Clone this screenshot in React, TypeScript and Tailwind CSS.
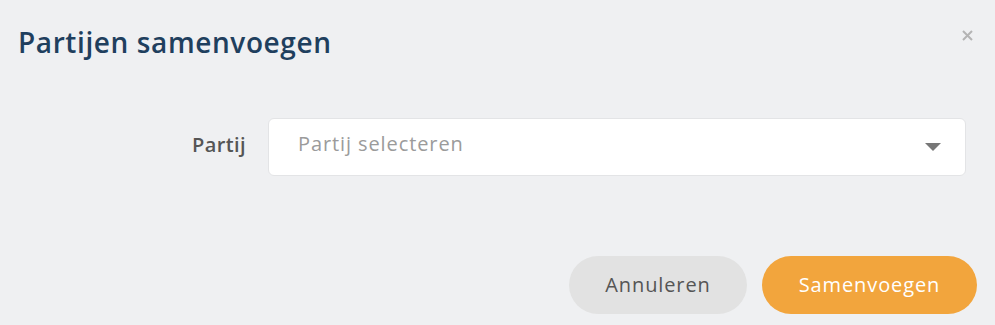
const App = () => {
  return (
    <div
      className="w-[995px] h-[325px] bg-[#eff0f2] relative"
      style={{ fontFamily: "'Open Sans', sans-serif" }}
    >
      <div className="flex items-start justify-between pl-[18px] pr-[22px] pt-[22px]">
        <h1 className="text-[28px] leading-[40px] tracking-[0.6px] text-[#1f3f5e] font-semibold">Partijen samenvoegen</h1>
        <svg className="mt-[8px]" width="11" height="11" viewBox="0 0 11 11">
          <path d="M1 1 L10 10 M10 1 L1 10" stroke="#b4b4b4" strokeWidth="2" />
        </svg>
      </div>
      <div className="flex items-center pt-[56px]">
        <label className="w-[268px] pr-[22px] mb-[4px] text-right text-[20px] tracking-[0.4px] font-semibold text-[#555]">Partij</label>
        <div className="w-[698px] h-[58px] bg-white border border-[#e3e4e6] rounded-[6px] flex items-center justify-between pl-[29px] pr-[24px]">
          <span className="mb-[6px] text-[20px] tracking-[0.9px] text-[#9b9b9b]">Partij selecteren</span>
          <svg width="16" height="8" viewBox="0 0 16 8">
            <path d="M0 0 H16 L8 8 Z" fill="#777" />
          </svg>
        </div>
      </div>
      <div className="flex justify-end gap-[15px] pr-[18px] pt-[80px]">
        <button className="w-[178px] h-[58px] rounded-full bg-[#e2e2e2] text-[20px] tracking-[0.9px] text-[#555]">Annuleren</button>
        <button className="w-[215px] h-[58px] rounded-full bg-[#f2a53d] text-[20px] tracking-[0.9px] text-white font-medium">Samenvoegen</button>
      </div>
    </div>
  );
};

export default App;
